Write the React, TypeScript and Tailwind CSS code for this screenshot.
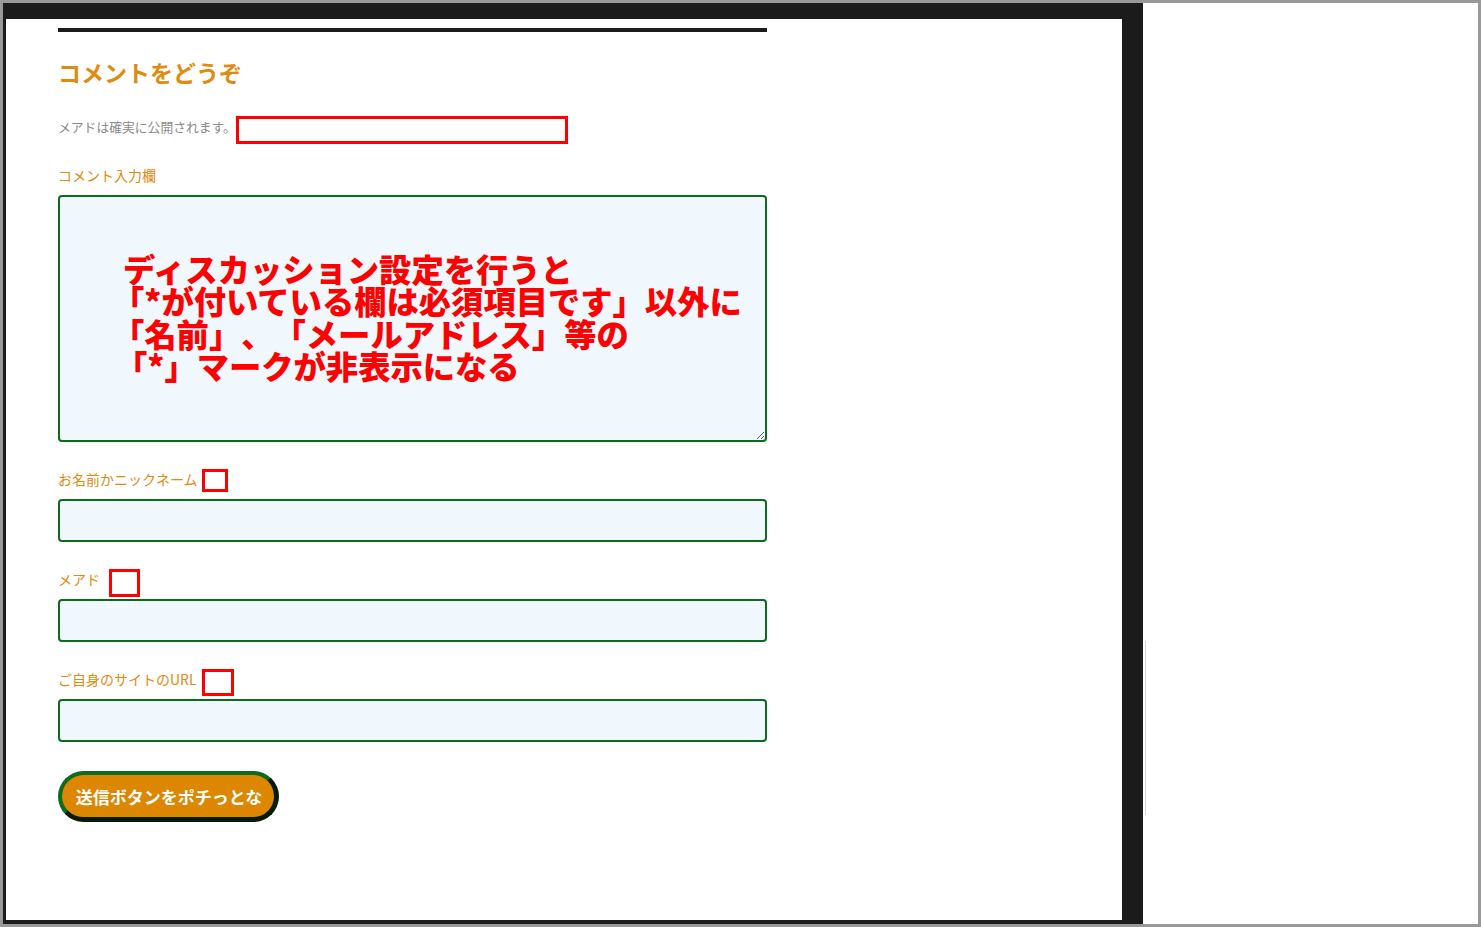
import React from "react";

const jp = "font-['Noto_Sans_CJK_JP','Noto_Sans',sans-serif]";

function Field() {
  return (
    <div className="h-[43px] w-full rounded-[4px] border-2 border-[#0b6b1e] bg-[#f0f7fd]" />
  );
}

function RedBox({ w, h }: { w: string; h: string }) {
  return <div className={`${w} ${h} border-[3px] border-[#ff0000] bg-white`} />;
}

export default function App() {
  return (
    <div className={`flex h-[927px] w-[1481px] border-[3px] border-[#999999] [text-spacing-trim:space-all] ${jp}`}>
      <div className="h-full w-[1140px] shrink-0 bg-[#1b1b1b] pb-[4px] pl-[3px] pr-[21px] pt-[16px]">
        <div className="h-full w-[1116px] bg-white pl-[52px]">
          <div className="flex w-[709px] flex-col pt-[9px]">
            <div className="h-[4px] w-full bg-[#1b1b1b]" />
            <h2 className="mt-[23px] h-[34px] text-[23px] font-bold leading-[34px] text-[#df8a10]">
              コメントをどうぞ
            </h2>
            <div className="mt-[27px] flex h-[28px] items-center">
              <span className="pb-[6px] text-[12.8px] leading-[16px] text-[#8a8a8a]">
                メアドは確実に公開されます。
              </span>
              <RedBox w="w-[332px]" h="h-[28px]" />
            </div>
            <div className="mt-[21px] h-[20px] text-[14px] leading-[20px] text-[#df8a10]">
              コメント入力欄
            </div>
            <div className="mt-[10px] h-[247px] w-full resize overflow-hidden rounded-[4px] border-2 border-[#0b6b1e] bg-[#f0f7fd] pt-[55px] text-[32.3px] font-black leading-[32.3px] text-[#ff0000]">
              <div className="pl-[63px]">ディスカッション設定を行うと</div>
              <div className="pl-[52px]">「*が付いている欄は必須項目です」以外に</div>
              <div className="pl-[52px]">「名前」、「メールアドレス」等の</div>
              <div className="pl-[55px]">「*」マークが非表示になる</div>
            </div>
            <div className="mt-[27px] flex h-[23px] items-center gap-[4px]">
              <span className="pb-[3px] text-[14px] leading-[20px] text-[#df8a10]">お名前かニックネーム</span>
              <RedBox w="w-[26px]" h="h-[23px]" />
            </div>
            <div className="mt-[7px]">
              <Field />
            </div>
            <div className="mt-[27px] flex h-[28px] items-start gap-[9px]">
              <span className="text-[14px] leading-[20px] text-[#df8a10]">メアド</span>
              <RedBox w="w-[31px]" h="h-[28px]" />
            </div>
            <div className="mt-[2px]">
              <Field />
            </div>
            <div className="mt-[27px] flex h-[27px] items-start gap-[5px]">
              <span className="text-[14px] leading-[20px] text-[#df8a10]">ご自身のサイトのURL</span>
              <RedBox w="w-[32px]" h="h-[27px]" />
            </div>
            <div className="mt-[3px]">
              <Field />
            </div>
            <div className="mt-[29px]">
              <button className="flex h-[51px] w-[221px] items-center justify-center rounded-full border-b-[5px] border-l-[4px] border-r-[5px] border-t-[4px] border-b-[#071a05] border-l-[#0b6b1e] border-r-[#071a05] border-t-[#0b6b1e] bg-[#dd8600] pl-[2px] text-[17px] font-bold leading-none text-white">
                送信ボタンをポチっとな
              </button>
            </div>
          </div>
        </div>
      </div>
      <div className="flex-1 bg-white pl-[2px] pt-[638px]">
        <div className="h-[174px] w-px bg-[#d4d4d4]" />
      </div>
    </div>
  );
}
